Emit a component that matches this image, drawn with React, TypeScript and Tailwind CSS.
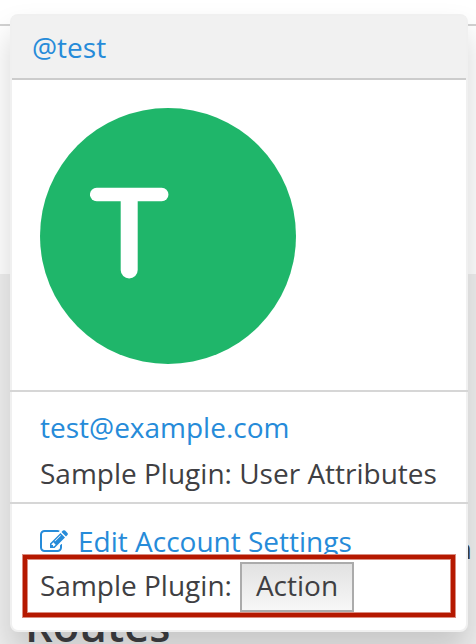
function PencilSquareIcon() {
  return (
    <svg viewBox="0 0 1792 1792" className="h-7 w-7 shrink-0" fill="currentColor" aria-hidden="true">
      <path d="M888 1184l116-116-152-152-116 116v56h96v96h56zm440-720q-16-16-33 1l-350 350q-17 17-1 33t33-1l350-350q17-17 1-33zm80 594v190q0 119-84.5 203.5t-203.5 84.5h-832q-119 0-203.5-84.5t-84.5-203.5v-832q0-119 84.5-203.5t203.5-84.5h832q63 0 117 25 15 7 18 23 3 17-9 29l-49 49q-14 14-32 8-23-6-45-6h-832q-66 0-113 47t-47 113v832q0 66 47 113t113 47h832q66 0 113-47t47-113v-126q0-13 9-22l64-64q15-15 35-7t20 29zm-96-738l288 288-672 672h-288v-288zm444 132l-92 92-288-288 92-92q28-28 68-28t68 28l152 152q28 28 28 68t-28 68z" />
    </svg>
  );
}

function UserCard() {
  return (
    <section className="absolute top-[14px] left-[10px] flex h-[618px] w-[458px] flex-col rounded-[8px] border-2 border-[#f0f0f0] bg-white shadow-[0_20px_32px_rgba(0,0,0,0.17)]">
      <header className="flex h-16 shrink-0 items-center border-b-2 border-[#cccccc] bg-[#f1f1f1] pl-5">
        <a className="text-[#268bd9]">@test</a>
      </header>
      <div className="h-[310px] shrink-0 px-7 pt-7">
        <div className="flex h-64 w-64 flex-col items-start rounded-full bg-[#1fb66a] pt-[79px] pl-[50px]">
          <svg viewBox="0 0 79 92" className="h-[92px] w-[79px]" stroke="white" strokeLinecap="round" aria-label="T">
            <path d="M6.7 7.5H71.7" strokeWidth="13.5" />
            <path d="M39.2 10V83" strokeWidth="17" />
          </svg>
        </div>
      </div>
      <div className="-mx-[2px] flex h-28 shrink-0 flex-col border-t-2 border-[#d6d6d6] px-[30px] pt-3 leading-[46px]">
        <a className="text-[#268bd9]">test@example.com</a>
        <span>Sample Plugin: User Attributes</span>
      </div>
      <div className="-mx-[2px] grow border-t-2 border-[#d6d6d6] pt-[14px]">
        <a className="flex h-[46px] items-center gap-[10px] pl-[30px] leading-[46px] text-[#268bd9]">
          <span className="pt-px">
            <PencilSquareIcon />
          </span>
          Edit Account Settings
        </a>
        <div className="relative -mt-[9px] ml-[13px] flex h-[62px] w-[432px] items-start border-4 border-[#b51800] bg-white pt-[3px] pl-[13px] shadow-[0_0_0_1px_#da8c80,inset_0_0_0_1px_#da8c80]">
          <span className="w-[200px] leading-[46px]">Sample Plugin:</span>
          <button className="h-[50px] w-[114px] border-2 border-[#ababab] bg-linear-to-b from-[#e2e2e2] to-[#f7f7f7] pb-1 leading-[42px]">
            Action
          </button>
        </div>
      </div>
    </section>
  );
}

export default function App() {
  return (
    <main className="relative h-[644px] w-[476px] overflow-hidden bg-white font-['Open_Sans',sans-serif] text-[28px] whitespace-nowrap text-[#3f3f43]">
      <div className="h-[26px] border-b-2 border-[#d2d2d2]" />
      <div className="h-[248px]" />
      <div className="flex h-[370px] flex-col bg-[#efefef]">
        <div className="mt-[254px] flex h-[40px] justify-end pr-1 leading-[40px]">in</div>
        <h2 className="pt-[9px] pl-[25px] text-[43.5px] leading-[98px] font-semibold">Routes</h2>
      </div>
      <UserCard />
    </main>
  );
}
